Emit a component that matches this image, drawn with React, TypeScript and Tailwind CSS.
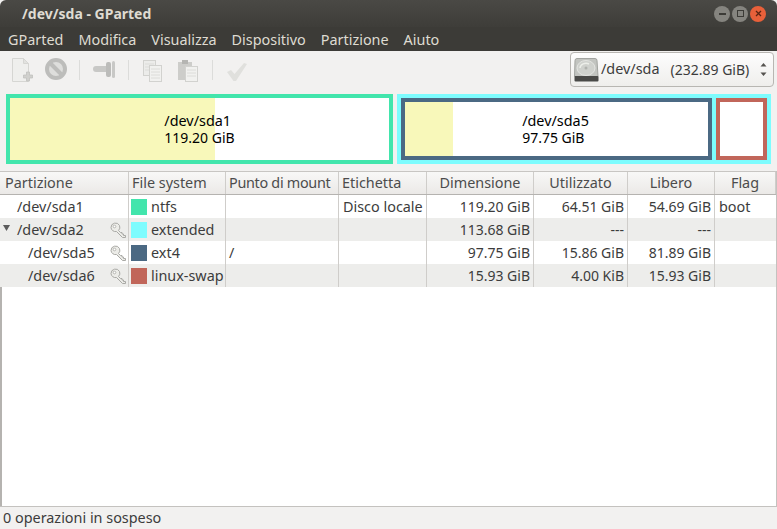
const menus = ['GParted', 'Modifica', 'Visualizza', 'Dispositivo', 'Partizione', 'Aiuto'];

const columns = [
  { label: 'Partizione', align: 'text-left pl-[5px]' },
  { label: 'File system', align: 'text-left pl-[3px]' },
  { label: 'Punto di mount', align: 'text-left pl-[3px] tracking-[-0.3px]' },
  { label: 'Etichetta', align: 'text-left pl-[3px]' },
  { label: 'Dimensione', align: 'text-center' },
  { label: 'Utilizzato', align: 'text-center' },
  { label: 'Libero', align: 'text-center' },
  { label: 'Flag', align: 'text-center' },
];

const rows = [
  { name: '/dev/sda1', indent: 'pl-[17px]', key: false, arrow: false, color: 'bg-[#42e5ac]', fs: 'ntfs', mount: '', label: 'Disco locale', size: '119.20 GiB', used: '64.51 GiB', free: '54.69 GiB', flag: 'boot' },
  { name: '/dev/sda2', indent: 'pl-[17px]', key: true, arrow: true, color: 'bg-[#7dfcfe]', fs: 'extended', mount: '', label: '', size: '113.68 GiB', used: '---', free: '---', flag: '' },
  { name: '/dev/sda5', indent: 'pl-[28px]', key: true, arrow: false, color: 'bg-[#4b6983]', fs: 'ext4', mount: '/', label: '', size: '97.75 GiB', used: '15.86 GiB', free: '81.89 GiB', flag: '' },
  { name: '/dev/sda6', indent: 'pl-[28px]', key: true, arrow: false, color: 'bg-[#c1665a]', fs: 'linux-swap', mount: '', label: '', size: '15.93 GiB', used: '4.00 KiB', free: '15.93 GiB', flag: '' },
];

const gridCols = 'grid grid-cols-[129px_97px_113px_88px_107px_94px_87px_1fr]';

function ToolbarIcons() {
  return (
    <svg width="250" height="30" viewBox="0 0 250 30" className="shrink-0">
      {/* new */}
      <path d="M2.5 3.5h11l5 5v18h-16z" fill="#efefed" stroke="#d6d6d3" />
      <path d="M13.5 8.5h5l-5-5z" fill="#e2e2df" stroke="#d6d6d3" />
      <path d="M13.500 20h3v-3h3v3h3v3h-3v3h-3v-3h-3z" fill="#d0d0cd" stroke="#bdbdba" strokeWidth="0.7" />
      {/* delete */}
      <circle cx="46" cy="14" r="9" fill="#dededc" stroke="#bdbdbb" strokeWidth="4" />
      <path d="M40 8l12 12" stroke="#bdbdbb" strokeWidth="4" />
      {/* separator */}
      <path d="M69.500 5v20" stroke="#dcdcda" />
      {/* resize */}
      <path d="M86 11h11v6H86a3 3 0 0 1 0-6z" fill="#c8c8c6" />
      <rect x="96" y="7" width="5" height="15" rx="2" fill="#bcbcba" />
      <rect x="102" y="6" width="3" height="17" rx="1.500" fill="#c8c8c6" />
      <path d="M118.500 5v20" stroke="#dcdcda" />
      {/* copy */}
      <rect x="133.500" y="5.500" width="12" height="15" fill="#ececea" stroke="#d2d2cf" />
      <path d="M135 9h9M135 12h9M135 15h4" stroke="#dcdcd9" />
      <rect x="139.500" y="10.500" width="12" height="16" fill="#f1f1ef" stroke="#d2d2cf" />
      <path d="M141 14h9M141 17h9M141 20h9M141 23h9" stroke="#dcdcd9" />
      {/* paste */}
      <rect x="168" y="7" width="14" height="18" fill="#cdcdca" />
      <rect x="172" y="5" width="6" height="4" fill="#b5b5b2" />
      <rect x="175.500" y="11.500" width="12" height="15" fill="#f1f1ef" stroke="#d2d2cf" />
      <path d="M177 15h9M177 18h9M177 21h9" stroke="#dcdcd9" />
      <path d="M202.500 5v20" stroke="#dcdcda" />
      {/* apply */}
      <path d="M217 17l4-2 3.500 4 9.500-11 3 1-11 17h-2.500z" fill="#e0e0dd" />
    </svg>
  );
}

function DiskIcon() {
  return (
    <svg width="25" height="24" viewBox="0 0 25 24" className="shrink-0">
      <path d="M3 0.500h18a2 2 0 0 1 2 2l1 16H0.500L1 2.500a2 2 0 0 1 2-2z" fill="#c2c4c0" stroke="#a2a4a0" />
      <ellipse cx="12" cy="10" rx="9" ry="7.500" fill="#cfd1cd" stroke="#e4e5e2" />
      <path d="M6 10a6 5 0 0 1 9-4" fill="none" stroke="#eceee9" strokeWidth="1.500" />
      <circle cx="12" cy="10" r="1.500" fill="#b0b2ae" />
      <rect x="0.500" y="18" width="24" height="5.500" rx="1" fill="#4a4a48" />
    </svg>
  );
}

function KeyIcon() {
  return (
    <svg width="17" height="17" viewBox="0 0 17 17" className="absolute right-[1px] top-[4px]">
      <path d="M1 5.500a4.500 4.500 0 0 1 8.500-2l0 0a4.500 4.500 0 0 1-1 5l2 2 1.500 0 0 1.500 1.500 0 0 1.500 2 0 0 2-3 0-6-6a4.500 4.500 0 0 1-5.500-4z" fill="#ecece8" stroke="#a9a9a5" strokeWidth="1" strokeLinejoin="round" />
      <circle cx="4.500" cy="4.500" r="1.300" fill="#ffffff" stroke="#a9a9a5" strokeWidth="0.800" />
    </svg>
  );
}

function WindowButton({ color, children }: { color: string; children: React.ReactNode }) {
  return (
    <div className={`w-[16px] h-[16px] rounded-full flex items-center justify-center text-[#3c3b37] ${color}`}>
      {children}
    </div>
  );
}

export default function App() {
  return (
    <div className="w-[777px] h-[529px] flex flex-col overflow-hidden bg-[#f2f1f0] text-[14.4px] leading-none text-[#3c3c3c] font-['Noto_Sans',sans-serif]">
      {/* Title bar */}
      <div className="h-[27px] shrink-0 bg-gradient-to-b from-[#4a4945] to-[#3e3d39] rounded-t-[6px] flex items-center justify-between pl-[22px] pr-[11px]">
        <span className="text-[#dfdbd2] font-bold text-[14px]">/dev/sda - GParted</span>
        <div className="flex items-center gap-[2px]">
          <WindowButton color="bg-[#85847f]">
            <div className="w-[7px] h-[2px] bg-[#3c3b37]" />
          </WindowButton>
          <WindowButton color="bg-[#85847f]">
            <div className="w-[7px] h-[7px] border border-[#3c3b37]" />
          </WindowButton>
          <WindowButton color="bg-[#e8603a]">
            <svg width="7" height="7" viewBox="0 0 7 7">
              <path d="M1 1l5 5M6 1l-5 5" stroke="#5a2412" strokeWidth="1.300" />
            </svg>
          </WindowButton>
        </div>
      </div>

      {/* Menu bar */}
      <div className="h-[24px] shrink-0 bg-[#3c3b37] flex items-center pl-[8px] pt-[2px] gap-[15px] text-[#dfdbd2]">
        {menus.map((m) => (
          <span key={m}>{m}</span>
        ))}
      </div>

      {/* Toolbar */}
      <div className="h-[42px] shrink-0 flex items-center pl-[10px] pr-[3px] pb-[5px] justify-between">
        <ToolbarIcons />
        <div className="w-[204px] h-[35px] rounded-[4px] border border-[#b8b6b2] bg-gradient-to-b from-[#fdfdfd] to-[#efeeec] flex items-center pl-[3px] pr-[6px]">
          <DiskIcon />
          <span className="ml-[2px]">/dev/sda</span>
          <span className="ml-[11px] text-[14px]">(232.89 GiB)</span>
          <svg width="7" height="15" viewBox="0 0 7 15" className="ml-auto">
            <path d="M3.500 1l3 3.500H0.500zM3.500 14l3-3.500H0.500z" fill="#55534f" />
          </svg>
        </div>
      </div>

      {/* Partition map */}
      <div className="h-[78px] shrink-0 px-[6px] pt-[1px] flex gap-[4px] text-black">
        <div className="w-[387px] h-[70px] border-[4px] border-[#42e5ac] bg-white relative flex items-center justify-center">
          <div className="absolute left-0 top-0 bottom-0 w-[205px] bg-[#f8f8ba]" />
          <div className="relative leading-[17px]">
            /dev/sda1
            <br />
            <span className="text-[14px]">119.20 GiB</span>
          </div>
        </div>
        <div className="w-[374px] h-[70px] bg-[#7dfcfe] p-[4px] flex gap-[4px]">
          <div className="w-[311px] border-[4px] border-[#4b6983] bg-white relative flex items-center justify-center">
            <div className="absolute left-0 top-0 bottom-0 w-[48px] bg-[#f8f8ba]" />
            <div className="relative leading-[17px] ml-[-2px]">
              /dev/sda5
              <br />
              <span className="text-[14px]">97.75 GiB</span>
            </div>
          </div>
          <div className="w-[51px] border-[4px] border-[#c1665a] bg-white" />
        </div>
      </div>

      {/* Table */}
      <div className="flex-1 min-h-0 bg-white border-l-[2px] border-r border-[#c4c2bf] border-l-[#b5b3b0] flex flex-col">
        <div className={`${gridCols} h-[24px] shrink-0 ml-[-2px] bg-gradient-to-b from-[#f8f8f7] to-[#ebe9e7] border-b border-[#b5b3b0] border-t border-t-[#c8c6c3]`}>
          {columns.map((c) => (
            <div key={c.label} className={`${c.align} border-r border-[#cfcdca] leading-[22px] text-[#4c4c4c] whitespace-nowrap overflow-hidden`}>
              {c.label}
            </div>
          ))}
        </div>
        <div className="ml-[-2px]">
          {rows.map((r, i) => (
            <div key={r.name} className={`${gridCols} h-[23px] leading-[23px] ${i % 2 === 1 ? 'bg-[#ededeb]' : 'bg-white'}`}>
              <div className={`${r.indent} relative border-r border-[#cfcdca]`}>
                {r.arrow && (
                  <svg width="8" height="7" viewBox="0 0 8 7" className="absolute left-[3px] top-[7px]">
                    <path d="M0 0h7L3.500 6z" fill="#5c5c5c" />
                  </svg>
                )}
                {r.name}
                {r.key && <KeyIcon />}
              </div>
              <div className="border-r border-[#cfcdca] flex items-center pl-[2px] gap-[4px] whitespace-nowrap">
                <div className={`w-[16px] h-[16px] shrink-0 ${r.color}`} />
                {r.fs}
              </div>
              <div className="border-r border-[#cfcdca] pl-[3px]">{r.mount}</div>
              <div className="border-r border-[#cfcdca] pl-[4px] whitespace-nowrap">{r.label}</div>
              <div className="border-r border-[#cfcdca] text-right pr-[3px] text-[14px]">{r.size}</div>
              <div className="border-r border-[#cfcdca] text-right pr-[3px] text-[14px]">{r.used}</div>
              <div className="border-r border-[#cfcdca] text-right pr-[3px] text-[14px]">{r.free}</div>
              <div className="pl-[4px]">{r.flag}</div>
            </div>
          ))}
        </div>
      </div>

      {/* Status bar */}
      <div className="h-[23px] shrink-0 border-t border-[#c4c2bf] pl-[3px] flex items-center">0 operazioni in sospeso</div>
    </div>
  );
}
